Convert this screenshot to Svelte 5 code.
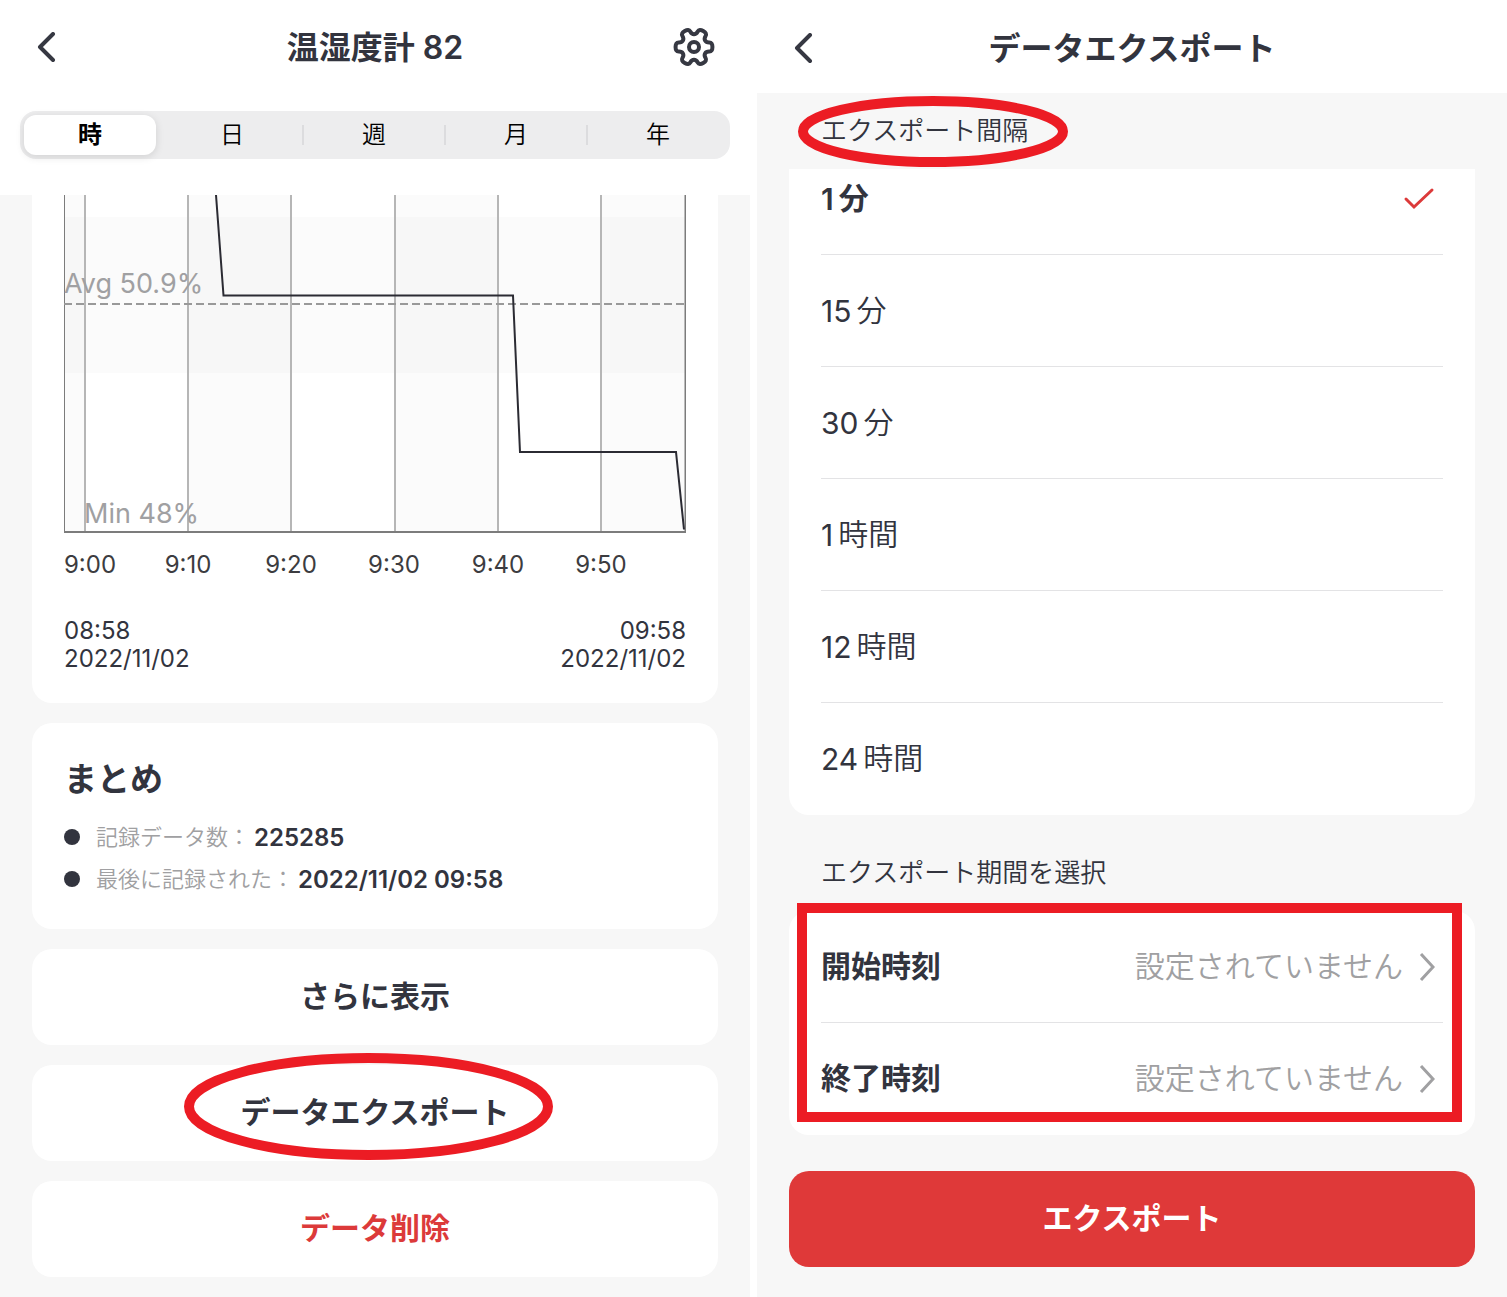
<script lang="ts">
	const ranges = ['時', '日', '週', '月', '年'];
	let activeRange = $state('時');

	const intervals = [
		{ amount: 1, unit: '分' },
		{ amount: 15, unit: '分' },
		{ amount: 30, unit: '分' },
		{ amount: 1, unit: '時間' },
		{ amount: 12, unit: '時間' },
		{ amount: 24, unit: '時間' },
	];
	let activeInterval = $state(0);

	const periods = ['開始時刻', '終了時刻'];

	const ticks = [
		{ x: 21, labelX: 26, label: '9:00' },
		{ x: 124, labelX: 124, label: '9:10' },
		{ x: 227, labelX: 227, label: '9:20' },
		{ x: 331, labelX: 330, label: '9:30' },
		{ x: 434, labelX: 434, label: '9:40' },
		{ x: 537, labelX: 537, label: '9:50' },
	];

	const bands = [
		{ x: 0, width: 21 },
		{ x: 124, width: 103 },
		{ x: 331, width: 103 },
		{ x: 537, width: 85 },
	];

	// six-toothed cog, smoothed through the midpoints of its outline
	function gearPath() {
		const points: number[][] = [];
		for (let tooth = 0; tooth < 6; tooth++) {
			for (const [angle, radius] of [[-14, 19], [14, 19], [20, 13], [40, 13]]) {
				const a = ((tooth * 60 + angle) * Math.PI) / 180;
				points.push([Math.cos(a) * radius, Math.sin(a) * radius]);
			}
		}
		const mid = (a: number[], b: number[]) => `${(a[0] + b[0]) / 2} ${(a[1] + b[1]) / 2}`;
		let d = `M${mid(points[points.length - 1], points[0])}`;
		points.forEach((p, i) => {
			d += `Q${p[0]} ${p[1]} ${mid(p, points[(i + 1) % points.length])}`;
		});
		return d + 'Z';
	}
</script>

<div class="screens">
	<main class="screen">
		<header class="bar">
			<button class="icon-button" aria-label="戻る">
				<svg width="20" height="32" viewBox="0 0 20 32"><path class="back" d="M17 2 4 15l13 13" /></svg>
			</button>
			<h1>温湿度計 82</h1>
			<button class="icon-button" aria-label="設定">
				<svg width="44" height="44" viewBox="-22 -22 44 44">
					<path class="gear" d={gearPath()} />
					<circle class="gear" r="5" />
				</svg>
			</button>
		</header>

		<div class="tabs">
			{#each ranges as range}
				<button class:active={range === activeRange} onclick={() => (activeRange = range)}>
					<span>{range}</span>
				</button>
			{/each}
		</div>

		<div class="content">
			<section class="card chart-card">
				<svg class="chart" viewBox="0 0 622 390">
					{#each bands as band}
						<rect class="band" x={band.x} y="0" width={band.width} height="337" />
					{/each}
					<rect class="band" x="0" y="22" width="622" height="156" />
					{#each ticks as tick}
						<path class="grid" d="M{tick.x} 0V337" />
						<text class="tick" x={tick.labelX} y="378">{tick.label}</text>
					{/each}
					<path class="thin-axis" d="M.5 0V338" />
					<path class="axis" d="M0 337H622M621.5 0V338" />
					<path class="average" d="M0 109H622" />
					<path class="line" d="M152 0l7.500 100.500H449L456 257H612L620 334.500" />
					<text class="note" x="0" y="98">Avg 50.9%</text>
					<text class="note" x="20" y="328">Min 48%</text>
				</svg>
				<div class="span">
					<p>08:58<br />2022/11/02</p>
					<p class="end">09:58<br />2022/11/02</p>
				</div>
			</section>

			<section class="card summary">
				<h2>まとめ</h2>
				<ul>
					<li><span>記録データ数：</span><strong>225285</strong></li>
					<li><span>最後に記録された：</span><strong>2022/11/02 09:58</strong></li>
				</ul>
			</section>

			<button class="card action">さらに表示</button>
			<button class="card action">
				データエクスポート
				<svg class="ring export-ring" width="370" height="108" viewBox="0 0 370 108">
					<ellipse cx="184.500" cy="54.500" rx="179.500" ry="48.500" />
				</svg>
			</button>
			<button class="card action danger">データ削除</button>
		</div>
	</main>

	<main class="screen">
		<header class="bar export-bar">
			<button class="icon-button" aria-label="戻る">
				<svg width="20" height="32" viewBox="0 0 20 32"><path class="back" d="M17 2 4 15l13 13" /></svg>
			</button>
			<h1>データエクスポート</h1>
		</header>

		<div class="content export">
			<h2 class="group-title">
				エクスポート間隔
				<svg class="ring title-ring" width="270" height="71" viewBox="0 0 270 71">
					<ellipse cx="135" cy="35.500" rx="130" ry="30.500" />
				</svg>
			</h2>
			<div class="card interval-card">
				<ul class="rows">
					{#each intervals as interval, i}
						<li>
							<button
								class="row"
								class:selected={i === activeInterval}
								onclick={() => (activeInterval = i)}>
								<span class="amount">{interval.amount}</span>
								<span class="unit">{interval.unit}</span>
								{#if i === activeInterval}
									<svg class="mark" width="32" height="24" viewBox="0 0 32 24"><path class="check" d="M3 12l8 8L29 3" /></svg>
								{/if}
							</button>
						</li>
					{/each}
				</ul>
			</div>

			<h2 class="group-title period-title">エクスポート期間を選択</h2>
			<div class="card period-card">
				<ul class="rows">
					{#each periods as period}
						<li>
							<button class="row period">
								<span>{period}</span>
								<span class="value">設定されていません</span>
								<svg class="mark" width="16" height="28" viewBox="0 0 16 28"><path class="next" d="M2 1l12 13L2 27" /></svg>
							</button>
						</li>
					{/each}
				</ul>
				<div class="frame"></div>
			</div>

			<button class="submit">エクスポート</button>
		</div>
	</main>
</div>

<style>
	:global(body) {
		margin: 0;
		background: #fff;
	}

	.screens {
		display: grid;
		grid-template-columns: 1fr 1fr;
		gap: 7px;
		color: #32343e;
		font-family: Inter, 'Noto Sans CJK JP', sans-serif;
	}

	.screen {
		display: flex;
		flex-direction: column;
		min-width: 0;
	}

	h1, h2, p, ul {
		margin: 0;
		padding: 0;
	}

	ul {
		list-style: none;
	}

	button {
		padding: 0;
		border: none;
		background: none;
		color: inherit;
		font: inherit;
		cursor: pointer;
	}

	svg {
		display: block;
		flex: none;
		fill: none;
	}

	.bar {
		display: grid;
		grid-template-columns: 60px 1fr 60px;
		align-items: center;
		box-sizing: border-box;
		height: 94px;
		padding: 2px 20px 0;
	}

	.export-bar {
		height: 93px;
		padding-top: 5px;
	}

	h1 {
		font-size: 32px;
		font-weight: 600;
		line-height: 48px;
		text-align: center;
	}

	.icon-button {
		justify-self: start;
		padding-left: 16px;
	}

	.icon-button:last-child {
		justify-self: end;
		padding: 0 14px 2px 0;
	}

	.back, .gear {
		stroke: #363842;
		stroke-width: 4;
		stroke-linecap: round;
		stroke-linejoin: round;
	}

	.tabs {
		display: grid;
		grid-template-columns: repeat(5, 1fr);
		height: 48px;
		margin: 17px 20px 36px;
		border-radius: 16px;
		background: #ededee;
		color: #000;
	}

	.tabs button {
		position: relative;
		padding: 4px 6px 4px 4px;
		font-size: 24px;
		font-weight: 350;
	}

	.tabs span {
		display: block;
		border-radius: 12px;
		line-height: 40px;
	}

	.tabs .active span {
		background: #fff;
		box-shadow: 0 2px 8px rgba(0, 0, 0, 0.12);
		font-weight: 700;
	}

	.tabs button:not(.active):not(:last-child)::after {
		content: '';
		position: absolute;
		top: 14px;
		right: 0;
		width: 2px;
		height: 20px;
		background: #dcdcde;
	}

	.content {
		display: flex;
		flex: 1;
		flex-direction: column;
		gap: 20px;
		padding: 0 32px 20px;
		background: #f7f7f7;
	}

	.card {
		border-radius: 20px;
		background: #fff;
	}

	.chart-card {
		padding: 0 32px 30px;
		border-radius: 0 0 20px 20px;
	}

	.chart {
		width: 100%;
	}

	.band {
		fill: rgba(0, 0, 0, 0.016);
	}

	.grid {
		stroke: #b6b6b6;
		stroke-width: 2;
	}

	.axis, .thin-axis {
		stroke: #7c7c7c;
		stroke-width: 2;
	}

	.thin-axis {
		stroke-width: 1;
	}

	.average {
		stroke: #999;
		stroke-width: 2;
		stroke-dasharray: 8 4;
	}

	.line {
		stroke: #2b2b33;
		stroke-width: 2;
	}

	.note {
		fill: #a0a0a2;
		font-size: 27px;
	}

	.tick {
		fill: #3c3c40;
		font-size: 24px;
		text-anchor: middle;
	}

	.span {
		display: flex;
		justify-content: space-between;
		margin-top: 32px;
		font-size: 24px;
		line-height: 28px;
	}

	.end {
		text-align: right;
	}

	.summary {
		padding: 32px 32px 29px;
	}

	.summary h2 {
		margin-bottom: 13px;
		font-size: 33px;
		line-height: 48px;
	}

	.summary li {
		display: flex;
		align-items: center;
		height: 42px;
	}

	.summary li::before {
		content: '';
		width: 16px;
		height: 16px;
		margin-right: 16px;
		border-radius: 50%;
		background: #32343e;
	}

	.summary span {
		margin-right: 4px;
		color: #a0a0a2;
		font-size: 22px;
		font-weight: 350;
		line-height: 26px;
	}

	.summary strong {
		font-size: 24px;
		font-weight: 600;
	}

	.action {
		position: relative;
		height: 96px;
		padding-bottom: 6px;
		font-size: 30px;
		font-weight: 600;
	}

	.danger {
		color: #dc3a3a;
	}

	.ring {
		position: absolute;
		stroke: #ec1c24;
		stroke-width: 10;
	}

	.export-ring {
		top: -13px;
		left: calc(50% - 191px);
	}

	.title-ring {
		top: 3px;
		left: 9px;
	}

	.export {
		gap: 0;
		padding-bottom: 30px;
	}

	.group-title {
		position: relative;
		padding-left: 32px;
		font-size: 26px;
		font-weight: 350;
		line-height: 76px;
	}

	.period-title {
		margin-top: 20px;
	}

	/* the first row is scrolled partly under the title */
	.interval-card {
		overflow: hidden;
		border-radius: 0 0 20px 20px;
	}

	.interval-card .rows {
		margin-top: -26px;
	}

	.rows {
		padding: 0 32px;
	}

	.rows li {
		box-sizing: border-box;
		height: 112px;
		border-bottom: 1px solid #e3e3e5;
	}

	.rows li:last-child {
		border-bottom: none;
	}

	.row {
		display: flex;
		align-items: center;
		width: 100%;
		height: 100%;
		padding-right: 8px;
		font-size: 30px;
		line-height: 40px;
		text-align: left;
	}

	.row span {
		padding-bottom: 2px;
	}

	.row .amount {
		margin-right: 5px;
		padding-bottom: 0;
	}

	.unit {
		font-weight: 350;
	}

	.selected, .period, .selected .unit {
		font-weight: 600;
	}

	.value {
		margin-left: auto;
		color: #a0a0a2;
		font-weight: 350;
	}

	.mark {
		margin-left: auto;
	}

	.value + .mark {
		margin-left: 16px;
	}

	.check {
		stroke: #dc3a3a;
		stroke-width: 3;
		stroke-linecap: round;
	}

	.next {
		stroke: #a0a0a2;
		stroke-width: 3;
	}

	.period-card {
		position: relative;
	}

	.frame {
		position: absolute;
		inset: -8px 13px 13px 8px;
		border: 10px solid #ec1c24;
		pointer-events: none;
	}

	.submit {
		height: 96px;
		margin-top: 36px;
		padding-bottom: 6px;
		border-radius: 20px;
		background: #df3939;
		color: #fff;
		font-size: 30px;
		font-weight: 600;
	}
</style>
